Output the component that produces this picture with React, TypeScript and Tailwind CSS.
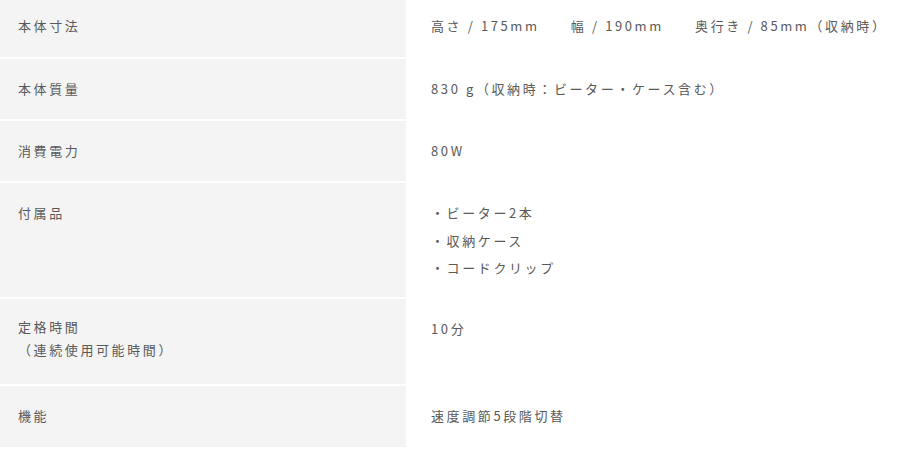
const font = { fontFamily: '"Noto Sans CJK JP", "Noto Sans", sans-serif' };

interface SpecRow {
  label: string[];
  value: string[];
  height: string;
  top: string;
  list?: boolean;
}

const rows: SpecRow[] = [
  { label: ['本体寸法'], value: ['高さ / 175mm　　幅 / 190mm　　奥行き / 85mm（収納時）'], height: 'h-[57px]', top: 'pt-[12px]' },
  { label: ['本体質量'], value: ['830 g（収納時：ビーター・ケース含む）'], height: 'h-[60px]', top: 'pt-[16px]' },
  { label: ['消費電力'], value: ['80W'], height: 'h-[60px]', top: 'pt-[16px]' },
  { label: ['付属品'], value: ['・ビーター2本', '・収納ケース', '・コードクリップ'], height: 'h-[114px]', top: 'pt-[16px]', list: true },
  { label: ['定格時間', '（連続使用可能時間）'], value: ['10分'], height: 'h-[85px]', top: 'pt-[16px]' },
  { label: ['機能'], value: ['速度調節5段階切替'], height: 'h-[61px]', top: 'pt-[16px]' },
];

export default function App() {
  return (
    <div className="w-[897px] h-[449px] bg-white overflow-hidden" style={font}>
      <div className="flex flex-col gap-[2px]">
        {rows.map((row, i) => (
          <div key={i} className={`grid grid-cols-[406px_1fr] ${row.height}`}>
            <div className={`bg-[#f4f4f4] pl-[18px] ${row.top} text-[13px] tracking-[0.2em] text-[#595959]`}>
              {row.label.map((l, j) => (
                <div key={j} className={row.label.length > 1 ? 'leading-[23px]' : 'leading-[28px]'}>
                  {l}
                </div>
              ))}
            </div>
            <div className={`pl-[25px] ${row.top} text-[13px] tracking-[0.2em] text-[#595959]`}>
              {row.value.map((v, j) => (
                <div key={j} className={`whitespace-pre ${row.list ? 'leading-[27.5px]' : 'leading-[28px]'}`}>
                  {v}
                </div>
              ))}
            </div>
          </div>
        ))}
      </div>
    </div>
  );
}
